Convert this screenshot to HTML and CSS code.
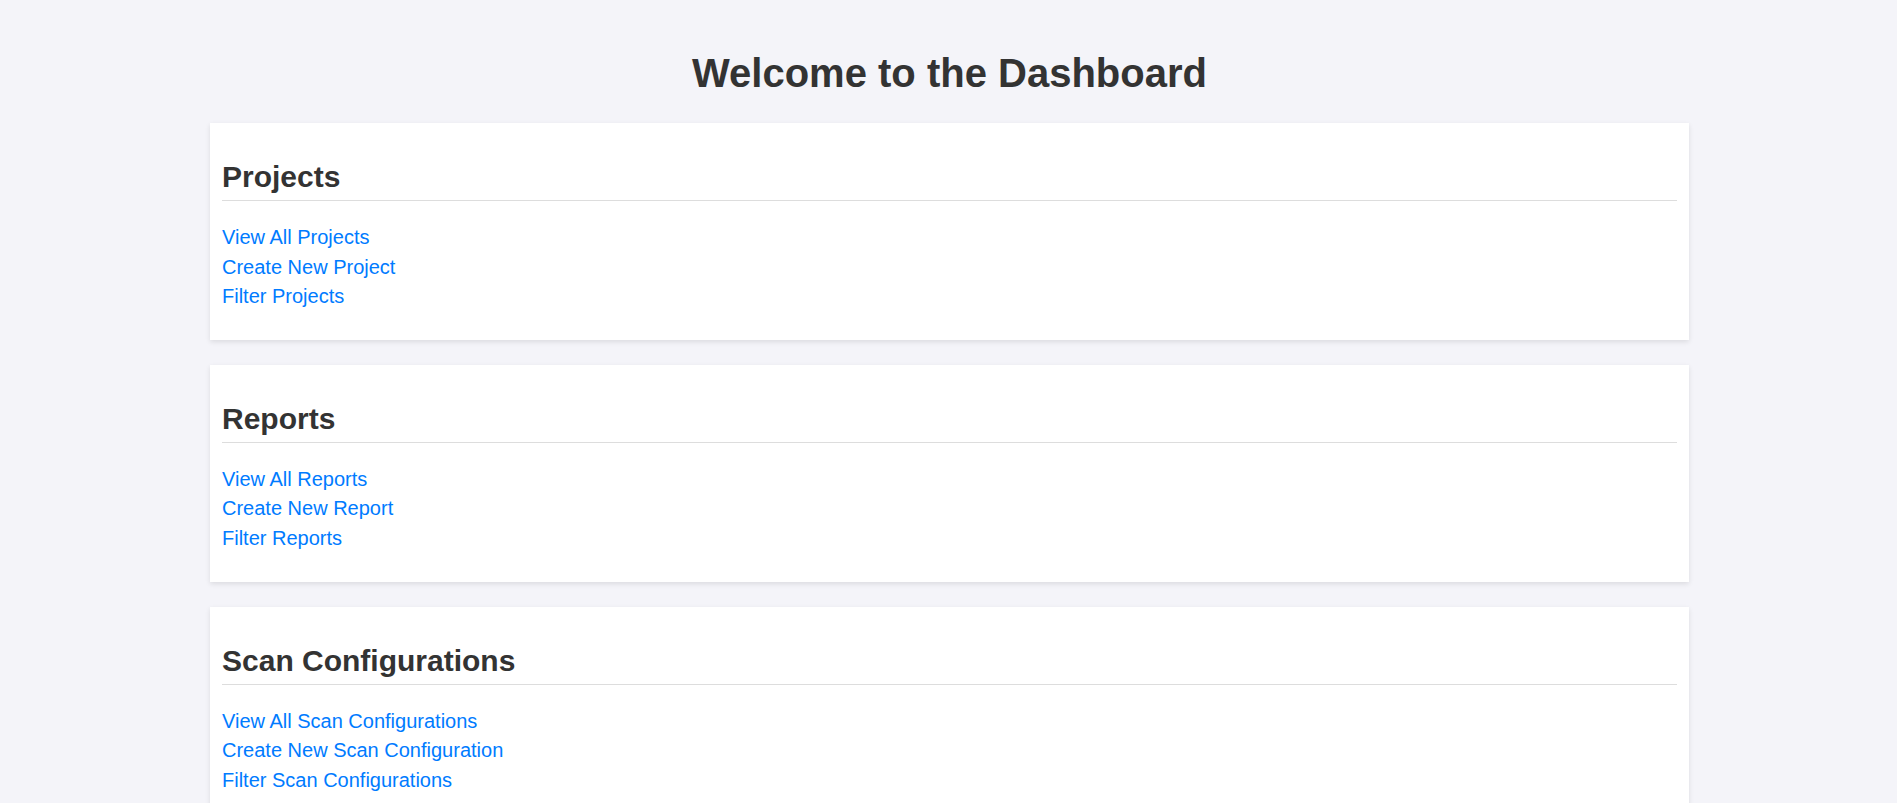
FILE: index.html
```html
<!DOCTYPE html>
<html lang="en">
<head>
<meta charset="utf-8">
<title>Dashboard</title>
<link rel="stylesheet" href="styles.css">
</head>
<body>
<div class="page">
  <h1 class="title">Welcome to the Dashboard</h1>
  <section class="card">
    <h2 class="card-title">Projects</h2>
    <ul class="links">
      <li><a href="#">View All Projects</a></li>
      <li><a href="#">Create New Project</a></li>
      <li><a href="#">Filter Projects</a></li>
    </ul>
  </section>
  <section class="card">
    <h2 class="card-title">Reports</h2>
    <ul class="links">
      <li><a href="#">View All Reports</a></li>
      <li><a href="#">Create New Report</a></li>
      <li><a href="#">Filter Reports</a></li>
    </ul>
  </section>
  <section class="card">
    <h2 class="card-title">Scan Configurations</h2>
    <ul class="links">
      <li><a href="#">View All Scan Configurations</a></li>
      <li><a href="#">Create New Scan Configuration</a></li>
      <li><a href="#">Filter Scan Configurations</a></li>
    </ul>
  </section>
</div>
</body>
</html>
```
FILE: styles.css
```css
html, body {
  margin: 0;
  padding: 0;
}
body {
  background: #f4f4f9;
  font-family: "Liberation Sans", Arial, sans-serif;
  color: #333;
}
.page {
  width: 1479px;
  margin: 0 208px 0 210px;
  padding-top: 50px;
}
.title {
  margin: 0 0 27px;
  font-size: 40px;
  line-height: 46px;
  font-weight: bold;
  text-align: center;
  color: #333;
}
.card {
  background: #fff;
  padding: 12px;
  margin-bottom: 25px;
  box-shadow: 0 2px 5px rgba(0, 0, 0, 0.1);
}
.card-title {
  margin: 25px 0 0;
  padding-bottom: 6px;
  border-bottom: 1px solid #ddd;
  font-size: 30px;
  line-height: 34px;
  font-weight: bold;
  color: #333;
}
.links {
  list-style: none;
  margin: 22px 0 16px;
  padding: 0;
}
.links li {
  font-size: 20px;
  line-height: 29.6px;
}
.links a {
  color: #007bff;
  text-decoration: none;
}
```
